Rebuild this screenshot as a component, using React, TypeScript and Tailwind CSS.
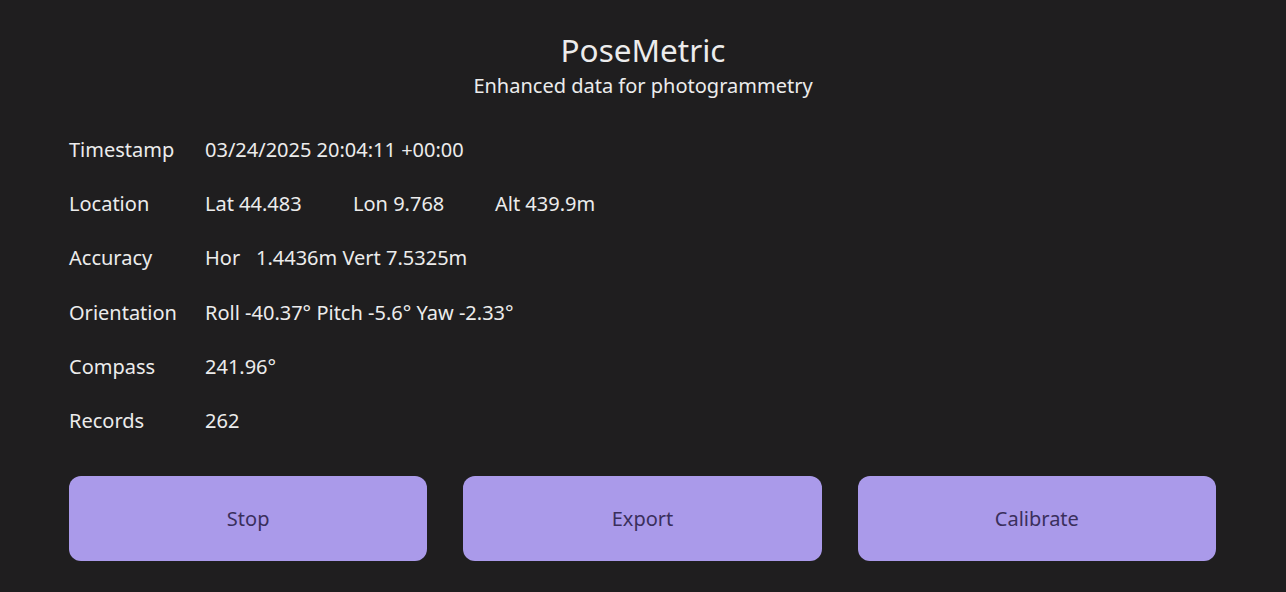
import React from 'react';

const rows: { label: string; value: React.ReactNode }[] = [
  { label: 'Timestamp', value: '03/24/2025 20:04:11 +00:00' },
  {
    label: 'Location',
    value: (
      <div className="flex">
        <span className="w-[148px]">Lat 44.483</span>
        <span className="w-[142px]">Lon 9.768</span>
        <span>Alt 439.9m</span>
      </div>
    ),
  },
  {
    label: 'Accuracy',
    value: (
      <div className="flex">
        <span className="w-[51px]">Hor</span>
        <span>1.4436m Vert 7.5325m</span>
      </div>
    ),
  },
  { label: 'Orientation', value: 'Roll -40.37° Pitch -5.6° Yaw -2.33°' },
  { label: 'Compass', value: '241.96°' },
  { label: 'Records', value: '262' },
];

export default function App() {
  return (
    <div
      className="w-[1286px] h-[592px] bg-[#1f1e1f] text-[#ececec] flex flex-col px-[69px] pt-[30px]"
      style={{ fontFamily: '"Noto Sans", "Open Sans", sans-serif' }}
    >
      <div className="flex flex-col items-center">
        <h1 className="text-[31.5px] leading-[40px]">PoseMetric</h1>
        <p className="text-[20px] leading-[28px] mt-[2px]">Enhanced data for photogrammetry</p>
      </div>

      <div className="flex flex-col mt-[23px]">
        {rows.map((r) => (
          <div key={r.label} className="flex items-center h-[54.2px] text-[20px]">
            <span className="w-[136px]">{r.label}</span>
            <div>{r.value}</div>
          </div>
        ))}
      </div>

      <div className="grid grid-cols-3 gap-[36px] mt-[28px] pr-px">
        {['Stop', 'Export', 'Calibrate'].map((b) => (
          <button
            key={b}
            className="h-[85px] rounded-[12px] bg-[#aa9aea] text-[#3a2f5c] text-[20px]"
          >
            {b}
          </button>
        ))}
      </div>
    </div>
  );
}
